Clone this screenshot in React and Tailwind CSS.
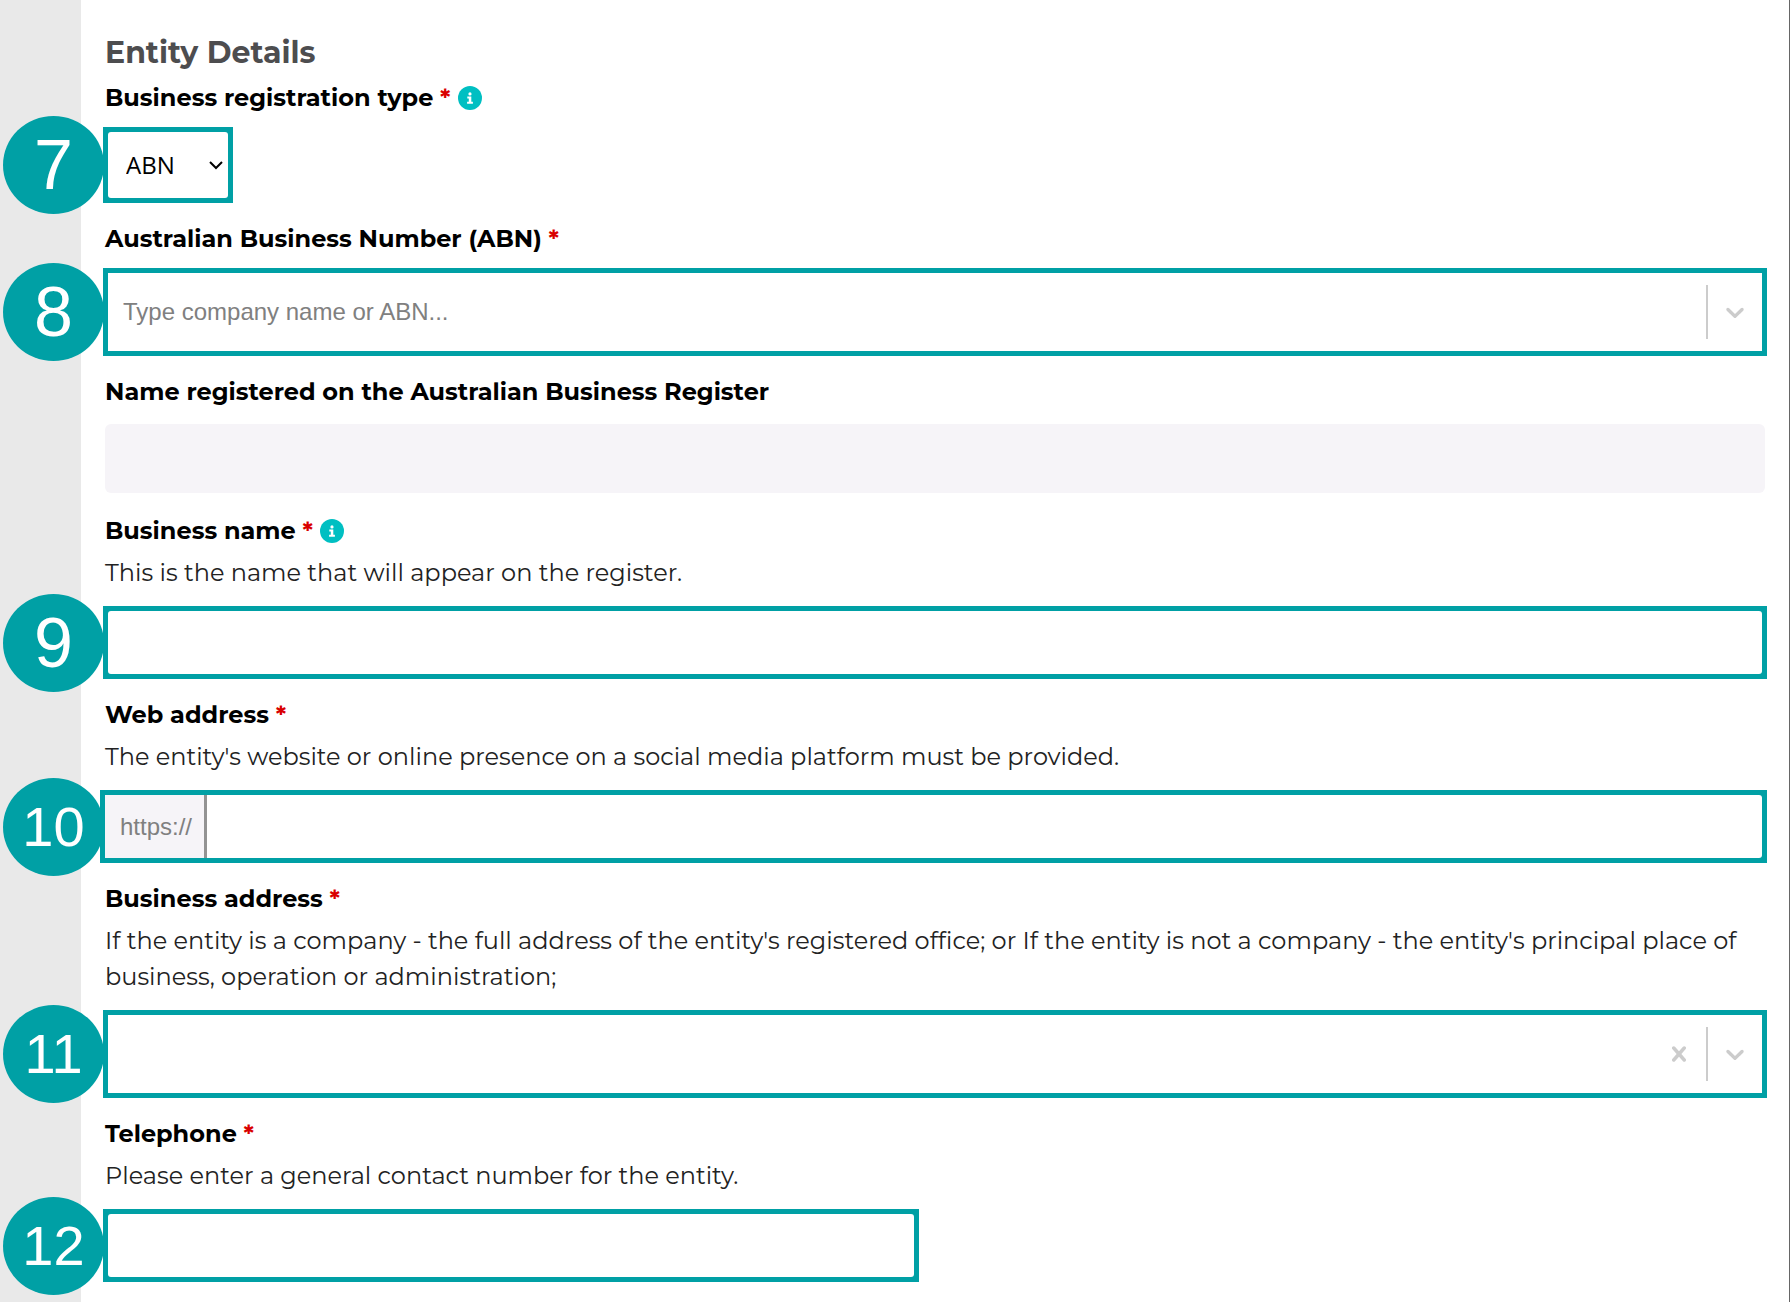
import React, { useState } from "react";

const ChevronIcon = () => (
  <svg width="30" height="30" viewBox="0 0 20 20" fill="currentColor" aria-hidden="true">
    <path d="M4.516 7.548c0.436-0.446 1.043-0.481 1.576 0l3.908 3.747 3.908-3.747c0.533-0.481 1.141-0.446 1.574 0 0.436 0.445 0.408 1.197 0 1.615-0.406 0.418-4.695 4.502-4.695 4.502-0.217 0.223-0.502 0.335-0.787 0.335s-0.57-0.112-0.789-0.335c0 0-4.287-4.084-4.695-4.502s-0.436-1.17 0-1.615z" />
  </svg>
);

const CrossIcon = () => (
  <svg width="30" height="30" viewBox="0 0 20 20" fill="currentColor" aria-hidden="true">
    <path d="M14.348 14.849c-0.469 0.469-1.229 0.469-1.697 0l-2.651-3.030-2.651 3.029c-0.469 0.469-1.229 0.469-1.697 0-0.469-0.469-0.469-1.229 0-1.697l2.758-3.15-2.759-3.152c-0.469-0.469-0.469-1.228 0-1.697s1.228-0.469 1.697 0l2.652 3.031 2.651-3.031c0.469-0.469 1.228-0.469 1.697 0s0.469 1.229 0 1.697l-2.758 3.152 2.758 3.15c0.469 0.469 0.469 1.229 0 1.698z" />
  </svg>
);

const InfoButton = ({ label }) => (
  <button type="button" aria-label={label} className="ml-[7px]">
    <svg width="24" height="24" viewBox="0 0 24 24" aria-hidden="true">
      <circle cx="12" cy="12" r="12" fill="#00bfc2" />
      <circle cx="12" cy="7.9" r="1.6" fill="white" />
      <path d="M9.3 10.6h4v5.2h1.6v2H9.1v-2h1.7v-3.2H9.3z" fill="white" />
    </svg>
  </button>
);

const Field = ({ id, label, required, info, help, children }) => (
  <div className="mb-[18px]">
    <div className="flex items-center">
      <label htmlFor={id} className="text-2xl leading-9 font-bold text-black">
        {label}
        {required && <span className="text-[#d90000]"> *</span>}
      </label>
      {info && <InfoButton label={info} />}
    </div>
    {help ? (
      <p id={`${id}-help`} className="mt-[6px] mb-[15px] text-2xl leading-9 text-[#222222]">
        {help}
      </p>
    ) : (
      <div className="h-[11px]" />
    )}
    {children}
  </div>
);

// Teal frame with the step number hanging off its left side
const Step = ({ number, className = "", frameClass = "", children }) => (
  <div className={`relative -mx-[2px] flex ${className}`}>
    <span
      className={`absolute top-1/2 right-full -mr-px flex h-[98px] w-[101px] -translate-y-1/2 items-center justify-center rounded-[50%] bg-[#00a0a5] font-['Liberation_Sans',Arial,sans-serif] leading-none text-white ${
        number < 10 ? "text-[70px]" : "text-[56px]"
      }`}
    >
      {number}
    </span>
    <div className={`flex min-w-0 flex-1 bg-[#00a0a5] p-[5px] ${frameClass}`}>{children}</div>
  </div>
);

const inputClass =
  "h-[63px] min-w-0 flex-1 rounded-[3px] bg-white px-4 font-['Liberation_Sans',Arial,sans-serif] text-2xl text-[#222222] focus:outline-none";

const SearchSelect = ({ id, placeholder, value, onChange, clearable }) => (
  <div className="flex h-[78px] flex-1 items-center bg-white text-[#cccccc]">
    <input
      id={id}
      type="text"
      role="combobox"
      aria-expanded="false"
      placeholder={placeholder}
      value={value}
      onChange={(e) => onChange(e.target.value)}
      className="h-full min-w-0 flex-1 px-[15px] font-['Liberation_Sans',Arial,sans-serif] text-2xl text-[#222222] placeholder:text-[#808080] focus:outline-none"
    />
    {clearable && (
      <button type="button" aria-label="Clear" onClick={() => onChange("")} className="p-3">
        <CrossIcon />
      </button>
    )}
    <span className="my-3 w-[2px] self-stretch bg-[#cccccc]" />
    <button type="button" aria-label="Show options" className="p-3">
      <ChevronIcon />
    </button>
  </div>
);

const App = () => {
  const [form, setForm] = useState({
    type: "ABN",
    abn: "",
    name: "",
    web: "",
    address: "",
    phone: "",
  });

  const update = (key) => (value) => setForm({ ...form, [key]: value });

  return (
    <div className="flex min-h-screen bg-[#e9e9e9] pl-[81px] font-[Montserrat,Inter,sans-serif]">
      <form className="min-w-0 flex-1 border-r border-[#666666] bg-white px-6 pt-[35px]">
        <h2 className="mb-[9px] text-[30px] leading-9 font-bold text-[#4d4d4f]">Entity Details</h2>

        <Field id="type" label="Business registration type" required info="About registration types">
          <Step number={7} className="w-[130px]">
            <div className="relative flex flex-1 items-center">
              <select
                id="type"
                value={form.type}
                onChange={(e) => update("type")(e.target.value)}
                className="h-[66px] w-full appearance-none rounded-[3px] bg-white pl-[18px] font-['Open_Sans',sans-serif] text-2xl text-black focus:outline-none"
              >
                <option>ABN</option>
                <option>ACN</option>
              </select>
              <svg
                className="pointer-events-none absolute right-[5px]"
                width="14"
                height="10"
                viewBox="0 0 14 10"
                fill="none"
                stroke="black"
                strokeWidth="2"
                aria-hidden="true"
              >
                <path d="M1 2l6 6 6-6" />
              </svg>
            </div>
          </Step>
        </Field>

        <Field id="abn" label="Australian Business Number (ABN)" required>
          <Step number={8}>
            <SearchSelect
              id="abn"
              placeholder="Type company name or ABN..."
              value={form.abn}
              onChange={update("abn")}
            />
          </Step>
        </Field>

        <Field id="registered" label="Name registered on the Australian Business Register">
          <div className="flex pt-[3px] pb-[2px]">
            <input
              id="registered"
              type="text"
              disabled
              className="h-[69px] min-w-0 flex-1 rounded-md bg-[#f6f4f8] px-4"
            />
          </div>
        </Field>

        <Field
          id="name"
          label="Business name"
          required
          info="About business names"
          help="This is the name that will appear on the register."
        >
          <Step number={9}>
            <input
              id="name"
              type="text"
              aria-describedby="name-help"
              value={form.name}
              onChange={(e) => update("name")(e.target.value)}
              className={inputClass}
            />
          </Step>
        </Field>

        <Field
          id="web"
          label="Web address"
          required
          help="The entity's website or online presence on a social media platform must be provided."
        >
          <Step number={10} frameClass="-ml-[3px]">
            <span className="flex items-center border-r-[3px] border-[#939393] bg-[#f6f4f8] pr-[12px] pl-[15px] font-['Liberation_Sans',Arial,sans-serif] text-2xl text-[#808080]">
              https://
            </span>
            <input
              id="web"
              type="text"
              aria-describedby="web-help"
              value={form.web}
              onChange={(e) => update("web")(e.target.value)}
              className={`${inputClass} rounded-l-none`}
            />
          </Step>
        </Field>

        <Field
          id="address"
          label="Business address"
          required
          help="If the entity is a company - the full address of the entity's registered office; or If the entity is not a company - the entity's principal place of business, operation or administration;"
        >
          <Step number={11}>
            <SearchSelect
              id="address"
              value={form.address}
              onChange={update("address")}
              clearable
            />
          </Step>
        </Field>

        <Field
          id="phone"
          label="Telephone"
          required
          help="Please enter a general contact number for the entity."
        >
          <Step number={12} className="w-[calc(50%-14px)]">
            <input
              id="phone"
              type="tel"
              aria-describedby="phone-help"
              value={form.phone}
              onChange={(e) => update("phone")(e.target.value)}
              className={inputClass}
            />
          </Step>
        </Field>
      </form>
    </div>
  );
};

export default App;
